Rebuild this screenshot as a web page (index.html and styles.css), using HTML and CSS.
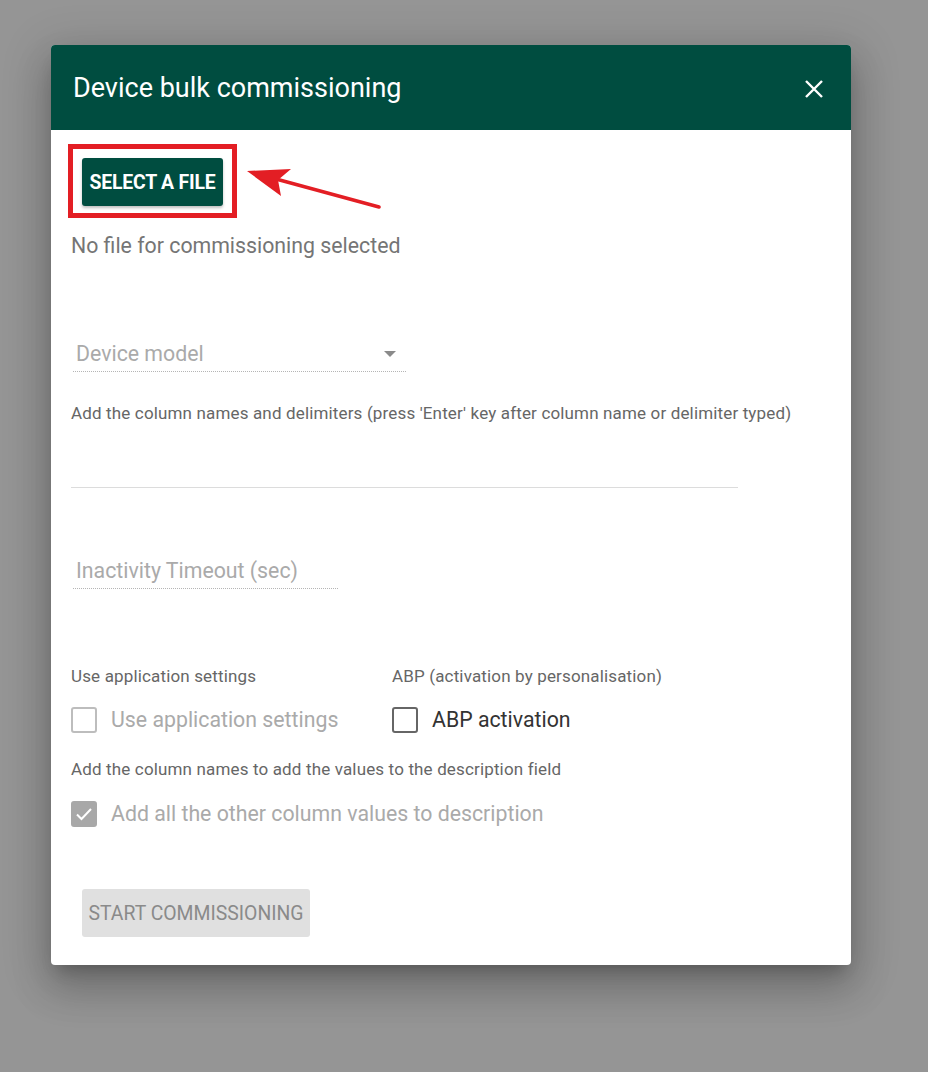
FILE: index.html
```html
<!DOCTYPE html>
<html lang="en">
<head>
<meta charset="utf-8">
<title>Device bulk commissioning</title>
<link rel="stylesheet" href="styles.css">
</head>
<body>
<div class="dialog">
  <div class="header">
    <h1 class="title">Device bulk commissioning</h1>
    <svg class="close" width="18" height="18" viewBox="0 0 18 18"><path d="M1 1L17 17M17 1L1 17" stroke="#fff" stroke-width="2.4" fill="none"/></svg>
  </div>
  <div class="content">
    <button class="file-btn">SELECT A FILE</button>
    <div class="nofile">No file for commissioning selected</div>
    <div class="field select-field">
      <span>Device model</span>
      <span class="caret"></span>
    </div>
    <div class="hint hint-cols">Add the column names and delimiters (press 'Enter' key after column name or delimiter typed)</div>
    <div class="chip-line"></div>
    <div class="field timeout-field"><span>Inactivity Timeout (sec)</span></div>
    <div class="two-col">
      <div class="col col-left">
        <div class="hint">Use application settings</div>
        <div class="check-row disabled"><span class="box"></span><span>Use application settings</span></div>
      </div>
      <div class="col">
        <div class="hint">ABP (activation by personalisation)</div>
        <div class="check-row"><span class="box"></span><span>ABP activation</span></div>
      </div>
    </div>
    <div class="hint hint-desc">Add the column names to add the values to the description field</div>
    <div class="check-row disabled checked-row"><span class="box checked"><svg width="18" height="14" viewBox="0 0 18 14"><path d="M2 7.5L6.5 12L16 2" stroke="#fff" stroke-width="2" fill="none"/></svg></span><span>Add all the other column values to description</span></div>
    <button class="start-btn" disabled>START COMMISSIONING</button>
  </div>
</div>
<div class="annot-box"></div>
<svg class="annot-arrow" width="150" height="55" viewBox="0 0 150 55">
  <line x1="36" y1="19" x2="139" y2="47" stroke="#e31e24" stroke-width="3.5" stroke-linecap="round"/>
  <polygon points="7,11 51,9 38,20 41,36" fill="#e31e24"/>
</svg>
</body>
</html>
```
FILE: styles.css
```css
html, body {
  margin: 0;
  padding: 0;
}
body {
  background: #959595;
  font-family: Roboto, "Liberation Sans", Arial, sans-serif;
  width: 928px;
  height: 1072px;
  overflow: hidden;
  position: relative;
}
.dialog {
  margin: 45px 0 0 51px;
  width: 800px;
  background: #fff;
  border-radius: 4px;
  box-shadow: 0 11px 15px -7px rgba(0,0,0,.22), 0 24px 38px 3px rgba(0,0,0,.16), 0 9px 46px 8px rgba(0,0,0,.14);
  overflow: hidden;
}
.header {
  height: 85px;
  background: #004d40;
  display: flex;
  align-items: center;
  justify-content: space-between;
  padding: 0 28px 0 22px;
}
.title {
  margin: 0;
  color: #fff;
  font-size: 27px;
  font-weight: 400;
  letter-spacing: 0;
}
.close {
  display: block;
  margin-top: 2px;
}
.content {
  padding: 28px 20px 28px 20px;
}
button {
  font-family: inherit;
  border: none;
  border-radius: 3px;
  height: 48px;
  padding: 0;
  display: block;
  margin-left: 11px;
}
.file-btn {
  width: 141px;
  background: #004d40;
  color: #fff;
  font-size: 19.4px;
  font-weight: 700;
  letter-spacing: -0.2px;
  box-shadow: 0 2px 3px rgba(0,0,0,.25);
}
.nofile {
  margin-top: 28px;
  font-size: 21.3px;
  line-height: 24px;
  color: #757575;
}
.field {
  display: flex;
  align-items: center;
  justify-content: space-between;
  box-sizing: border-box;
  margin-left: 2px;
  padding: 0 0 5px 3px;
  font-size: 21.3px;
  line-height: 24px;
  color: #aaa;
  border-bottom: 1px dotted #b5b5b5;
}
.select-field {
  margin-top: 84px;
  width: 333px;
}
.caret {
  width: 0;
  height: 0;
  border-left: 6px solid transparent;
  border-right: 6px solid transparent;
  border-top: 6px solid #8a8a8a;
  margin-right: 10px;
}
.hint {
  font-size: 17px;
  letter-spacing: 0.15px;
  line-height: 20px;
  color: #666;
}
.hint-cols {
  margin-top: 31px;
}
.chip-line {
  width: 667px;
  height: 64px;
  border-bottom: 1px solid #dcdcdc;
}
.timeout-field {
  margin-top: 71px;
  width: 265px;
}
.two-col {
  display: flex;
  margin-top: 77px;
}
.col-left {
  width: 321px;
}
.check-row {
  display: flex;
  align-items: center;
  gap: 14px;
  font-size: 21.3px;
  line-height: 26px;
  color: #333;
  margin-top: 21px;
}
.box {
  width: 26px;
  height: 26px;
  box-sizing: border-box;
  border: 2px solid #666;
  border-radius: 3px;
  display: flex;
  align-items: center;
  justify-content: center;
}
.disabled {
  color: #aaa;
}
.disabled .box {
  border-color: #bdbdbd;
}
.box.checked {
  background: #a8a8a8;
  border-color: #a8a8a8;
}
.hint-desc {
  margin-top: 26px;
}
.checked-row {
  margin-top: 22px;
}
.start-btn {
  margin-top: 62px;
  width: 228px;
  background: #e0e0e0;
  color: #8a8a8a;
  font-size: 19.4px;
  font-weight: 400;
}
.annot-box {
  position: absolute;
  left: 68px;
  top: 144px;
  width: 169px;
  height: 74px;
  box-sizing: border-box;
  border: 5px solid #e31e24;
}
.annot-arrow {
  position: absolute;
  left: 240px;
  top: 160px;
}
```
